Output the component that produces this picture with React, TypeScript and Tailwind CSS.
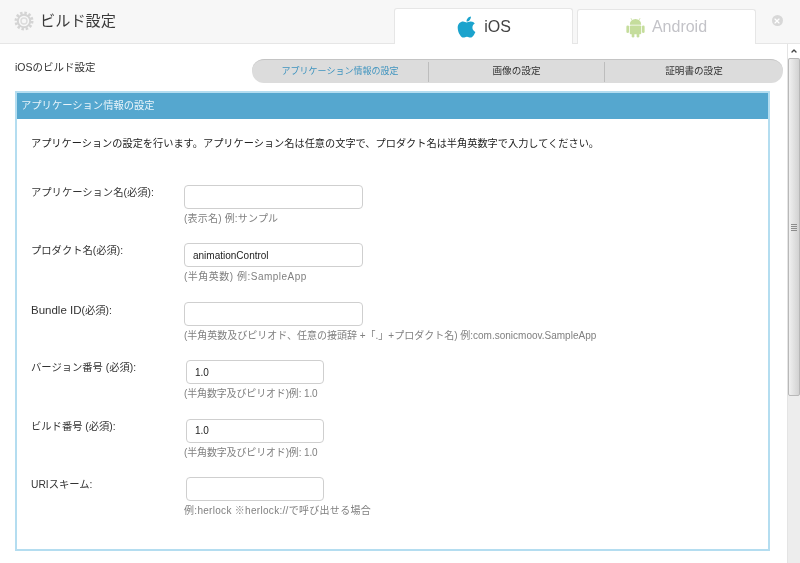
import { FaApple } from 'react-icons/fa';
import { X, ChevronUp } from 'lucide-react';

const rows = [
  { label: 'アプリケーション名(必須):', value: '', hint: '(表示名) 例:サンプル', hintClass: 'tracking-[0.2px]', wide: true },
  { label: 'プロダクト名(必須):', value: 'animationControl', hint: '(半角英数) 例:SampleApp', hintClass: 'tracking-[0.5px]', wide: true },
  {
    label: 'Bundle ID(必須):',
    value: '',
    hint: '(半角英数及びピリオド、任意の接頭辞 +「.」+プロダクト名) 例:com.sonicmoov.SampleApp',
    hintClass: '',
    wide: true,
  },
  { label: 'バージョン番号 (必須):', value: '1.0', hint: '(半角数字及びピリオド)例: 1.0', hintClass: 'tracking-[-0.15px]', wide: false },
  { label: 'ビルド番号 (必須):', value: '1.0', hint: '(半角数字及びピリオド)例: 1.0', hintClass: 'tracking-[-0.15px]', wide: false },
  { label: 'URIスキーム:', value: '', hint: '例:herlock ※herlock://で呼び出せる場合', hintClass: 'tracking-[0.3px]', wide: false },
];

const GearIcon = () => (
  <svg viewBox="0 0 20 20" className="w-[20px] h-[20px]">
    <circle cx="10" cy="10" r="8" fill="none" stroke="#d4d4d4" strokeWidth="3" strokeDasharray="2.4 1.8" />
    <circle cx="10" cy="10" r="6.2" fill="none" stroke="#d4d4d4" strokeWidth="2" />
    <circle cx="10" cy="10" r="3" fill="none" stroke="#dcdcdc" strokeWidth="1.4" />
  </svg>
);

const AndroidIcon = () => (
  <svg viewBox="0 0 20 22" className="w-[19px] h-[21px]" fill="#c5dd9c">
    <path d="M4 8a6 6 0 0 1 12 0z" />
    <path d="M6.5 3.5L5.2 1.2M13.5 3.5l1.3-2.3" stroke="#c5dd9c" strokeWidth="0.8" />
    <rect x="4" y="8.8" width="12" height="9.2" rx="1" />
    <rect x="0.4" y="8.8" width="2.8" height="8" rx="1.4" />
    <rect x="16.8" y="8.8" width="2.8" height="8" rx="1.4" />
    <rect x="6" y="16" width="2.8" height="5.6" rx="1.4" />
    <rect x="11.2" y="16" width="2.8" height="5.6" rx="1.4" />
  </svg>
);

const App = () => {
  return (
    <div className="w-[800px] h-[563px] overflow-hidden bg-white flex flex-col font-['Liberation_Sans','Noto_Sans_CJK_JP',sans-serif] text-[#333] blur-[0.35px]">
      {/* Header */}
      <header className="h-[44px] shrink-0 flex items-end bg-[#f7f7f7] border-b border-[#e6e6e6]">
        <div className="flex items-center self-center gap-[6px] pl-[14px] flex-1">
          <GearIcon />
          <h1 className="text-[15.2px] text-[#3a3a3a]">ビルド設定</h1>
        </div>
        <div className="flex items-end gap-[4px] mb-[-1px]">
          <div className="w-[179px] h-[36px] flex items-center justify-center gap-[7px] bg-white border border-b-0 border-[#e6e6e6] rounded-t-[3px]">
            <FaApple className="w-[21px] h-[24px] text-[#1ba3cd]" />
            <span className="text-[16px] text-[#444]">iOS</span>
          </div>
          <div className="w-[179px] h-[35px] flex items-center justify-center gap-[7px] bg-white border border-b-0 border-[#e6e6e6] rounded-t-[3px]">
            <AndroidIcon />
            <span className="text-[16px] text-[#c3c3c8]">Android</span>
          </div>
        </div>
        <div className="w-[44px] self-start pt-[15px] flex justify-center pr-[2px]">
          <span className="w-[11px] h-[11px] rounded-full bg-[#d8d8d8] flex items-center justify-center">
            <X className="w-[8px] h-[8px] text-white" strokeWidth={3.5} />
          </span>
        </div>
      </header>

      <div className="flex-1 flex min-h-0">
        <main className="flex-1 min-w-0 pl-[15px] pr-[4px]">
          {/* Title and sub nav */}
          <div className="flex justify-between items-start pt-[15px]">
            <p className="text-[10.5px] leading-[16px] text-[#333]">iOSのビルド設定</p>
            <nav className="w-[531px] h-[24px] flex items-center bg-[#dcdcdc] border-t border-[#c4c4c4] rounded-full text-[9.6px] text-[#333]">
              <span className="w-[176px] text-center text-[9px] text-[#3f94bf]">アプリケーション情報の設定</span>
              <span className="w-[177px] h-[20px] flex items-center justify-center border-x border-[#bdbdbd]">画像の設定</span>
              <span className="flex-1 text-center">証明書の設定</span>
            </nav>
          </div>

          {/* Panel */}
          <section className="mt-[8px] mr-[13px] h-[460px] border-2 border-[#b4ddf0]">
            <h2 className="h-[26px] flex items-center pl-[4px] bg-[#55a7cf] text-[10.3px] text-[#e8f4fa]">
              アプリケーション情報の設定
            </h2>
            <p className="mt-[17px] ml-[14px] text-[10.2px] leading-[16px] text-[#222] whitespace-nowrap">
              アプリケーションの設定を行います。アプリケーション名は任意の文字で、プロダクト名は半角英数字で入力してください。
            </p>
            <div className="mt-[33px] ml-[14px] flex flex-col">
              {rows.map((row) => (
                <div key={row.label} className="h-[58.4px] flex items-start">
                  <label className="w-[153px] shrink-0 text-[10.3px] leading-[16px] text-[#333]">
                    {row.label.startsWith('Bundle') ? (
                      <>
                        <span className="text-[11.5px]">Bundle ID</span>(必須):
                      </>
                    ) : (
                      row.label
                    )}
                  </label>
                  <div className="flex flex-col">
                    <input
                      readOnly
                      value={row.value}
                      className={
                        row.wide
                          ? 'w-[179px] h-[24px] px-[8px] bg-white border border-[#cfcfcf] rounded-[4px] text-[10px] text-[#222] outline-none'
                          : 'w-[138px] h-[24px] ml-[2px] px-[8px] bg-white border border-[#cfcfcf] rounded-[4px] text-[10px] text-[#222] outline-none'
                      }
                    />
                    <span className={`mt-[3px] text-[10px] leading-[14px] text-[#808080] whitespace-nowrap ${row.hintClass}`}>
                      {row.hint}
                    </span>
                  </div>
                </div>
              ))}
            </div>
          </section>
        </main>

        {/* Scrollbar */}
        <div className="w-[13px] shrink-0 flex flex-col bg-[#ededed] border-l border-[#e4e4e4]">
          <div className="h-[14px] flex items-center justify-center bg-white">
            <ChevronUp className="w-[8px] h-[8px] text-[#444]" strokeWidth={4} />
          </div>
          <div className="h-[338px] flex items-center justify-center bg-gradient-to-r from-[#f0f0f0] to-[#d2d2d2] border border-[#b8b8b8] rounded-[2px]">
            <div className="w-[6px] h-[7px] flex flex-col justify-between">
              <span className="h-px bg-[#8c8c8c]" />
              <span className="h-px bg-[#8c8c8c]" />
              <span className="h-px bg-[#8c8c8c]" />
              <span className="h-px bg-[#8c8c8c]" />
            </div>
          </div>
        </div>
      </div>
    </div>
  );
};

export default App;
